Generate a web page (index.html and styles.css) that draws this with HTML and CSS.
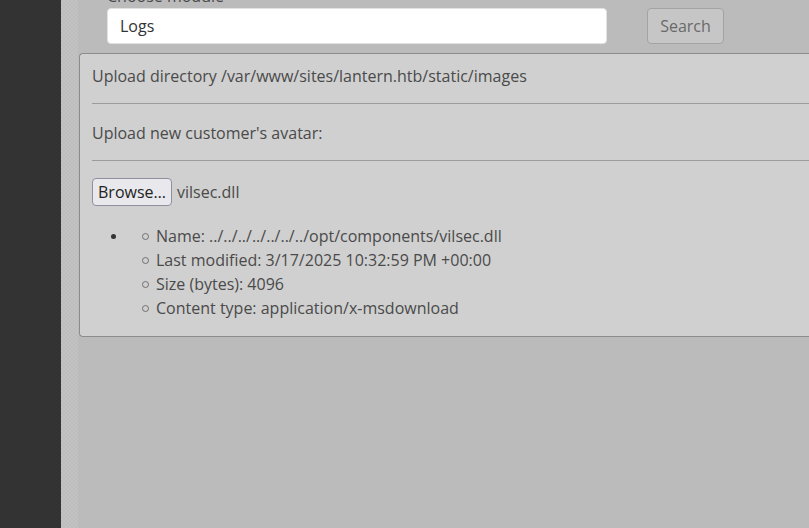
FILE: index.html
```html
<!DOCTYPE html>
<html>
<head>
<meta charset="utf-8">
<link rel="stylesheet" href="styles.css">
</head>
<body>
<div class="layout">
  <aside class="sidebar"></aside>
  <div class="gutter"></div>
  <main class="main">
    <form class="search-row">
      <div class="field">
        <label class="field-label">Choose module</label>
        <input class="field-input" type="text" value="Logs">
      </div>
      <button class="search-btn" type="button">Search</button>
    </form>
    <section class="card">
      <p class="line">Upload directory /var/www/sites/lantern.htb/static/images</p>
      <hr class="sep">
      <p class="line">Upload new customer's avatar:</p>
      <hr class="sep">
      <div class="file-row">
        <button class="browse-btn" type="button">Browse…</button>
        <span class="file-name">vilsec.dll</span>
      </div>
      <ul class="outer-list">
        <li>
          <ul class="inner-list">
            <li>Name: ../../../../../../../opt/components/vilsec.dll</li>
            <li>Last modified: 3/17/2025 10:32:59 PM +00:00</li>
            <li>Size (bytes): 4096</li>
            <li>Content type: application/x-msdownload</li>
          </ul>
        </li>
      </ul>
    </section>
  </main>
</div>
</body>
</html>
```
FILE: styles.css
```css
html, body {
  margin: 0;
  padding: 0;
  height: 100%;
  overflow: hidden;
}
body {
  font-family: "Open Sans", "Liberation Sans", sans-serif;
  font-size: 16px;
  line-height: 24px;
  color: #4a4a4a;
  background: #bbbbbb;
}
.layout {
  display: flex;
  height: 528px;
}
.sidebar {
  width: 61px;
  flex: none;
  background: #333333;
}
.gutter {
  width: 17px;
  flex: none;
  background-color: #bdbdbd;
  background-image:
    linear-gradient(45deg, #c3c3c3 25%, transparent 25%, transparent 75%, #c3c3c3 75%),
    linear-gradient(45deg, #c3c3c3 25%, transparent 25%, transparent 75%, #c3c3c3 75%);
  background-size: 4px 4px;
  background-position: 0 0, 2px 2px;
}
.main {
  flex: 1;
  min-width: 0;
  padding-left: 1px;
  background: #bbbbbb;
}
.search-row {
  display: flex;
  align-items: flex-end;
  gap: 40px;
  margin: -16px 0 0;
  padding-left: 28px;
}
.field {
  display: flex;
  flex-direction: column;
}
.field-label {
  display: block;
  height: 24px;
  color: #4a4a4a;
}
.field-input {
  box-sizing: border-box;
  width: 500px;
  height: 36px;
  margin: 0;
  padding: 0 12px;
  border: 1px solid #e2e2e2;
  border-radius: 4px;
  background: #ffffff;
  font-family: inherit;
  font-size: 16px;
  color: #333333;
  outline: none;
}
.search-btn {
  box-sizing: border-box;
  width: 77px;
  height: 36px;
  margin: 0;
  padding: 0;
  border: 1px solid #a3a3a3;
  border-radius: 4px;
  background: #c6c6c6;
  font-family: inherit;
  font-size: 16px;
  color: #6a6a6a;
}
.card {
  box-sizing: border-box;
  width: 760px;
  margin-top: 9px;
  padding: 10px 12px 16px;
  border: 1px solid #8c8c8c;
  border-right: none;
  border-radius: 4px 0 0 4px;
  background: #d0d0d0;
}
.line {
  margin: 0;
}
.sep {
  margin: 15px 0 17px;
  height: 0;
  border: none;
  border-top: 1px solid #9c9c9c;
}
.file-row {
  display: flex;
  align-items: center;
  gap: 5px;
  height: 28px;
}
.browse-btn {
  box-sizing: border-box;
  flex: none;
  width: 80px;
  height: 28px;
  margin: 0;
  padding: 0;
  border: 1px solid #8f8f9d;
  border-radius: 4px;
  background: #e9e9ed;
  font-family: inherit;
  font-size: 16px;
  line-height: 26px;
  color: #222222;
}
.file-name {
  color: #4a4a4a;
}
.outer-list {
  margin: 18px 0 0;
  padding-left: 32px;
  list-style: none;
}
.outer-list > li::before {
  content: "";
  float: left;
  width: 5px;
  height: 5px;
  margin: 10px 0 0 -13px;
  border-radius: 50%;
  background: #333333;
}
.inner-list {
  margin: 0;
  padding-left: 32px;
  list-style: none;
}
.inner-list > li::before {
  content: "";
  display: inline-block;
  box-sizing: border-box;
  width: 7px;
  height: 7px;
  margin: 0 7px 0 -14px;
  border: 1px solid #6f6f6f;
  border-radius: 50%;
  vertical-align: 2px;
}
```
